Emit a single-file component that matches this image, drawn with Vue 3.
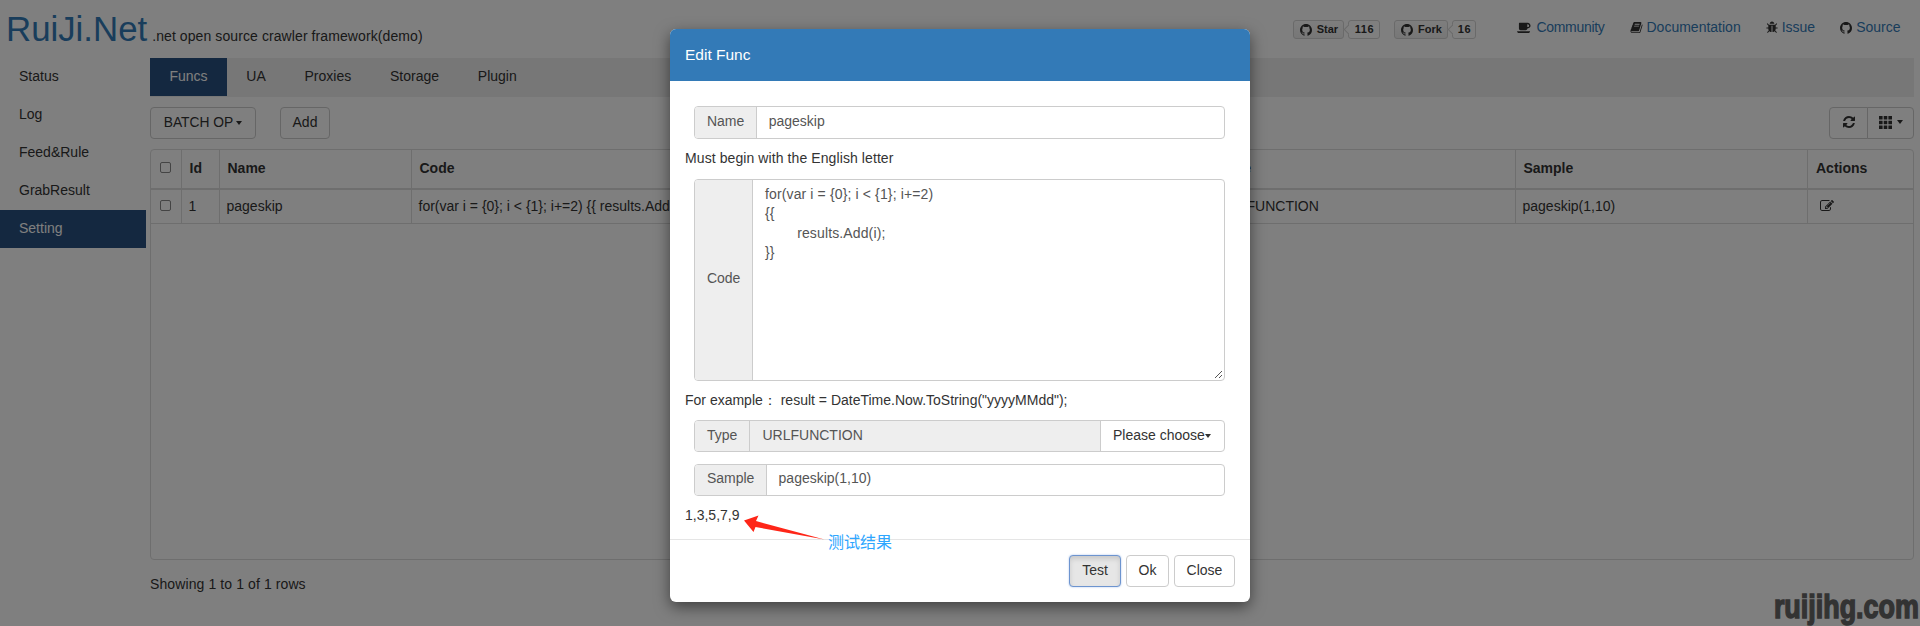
<script setup>
const githubPath = 'M8 0C3.58 0 0 3.58 0 8c0 3.54 2.29 6.53 5.47 7.59.4.07.55-.17.55-.38 0-.19-.01-.82-.01-1.49-2.01.37-2.53-.49-2.69-.94-.09-.23-.48-.94-.82-1.13-.28-.15-.68-.52-.01-.53.63-.01 1.08.58 1.23.82.72 1.21 1.87.87 2.33.66.07-.52.28-.87.51-1.07-1.78-.2-3.64-.89-3.64-3.95 0-.87.31-1.59.82-2.15-.08-.2-.36-1.02.08-2.12 0 0 .67-.21 2.2.82.64-.18 1.32-.27 2-.27.68 0 1.36.09 2 .27 1.53-1.04 2.2-.82 2.2-.82.44 1.1.16 1.92.08 2.12.51.56.82 1.27.82 2.15 0 3.07-1.87 3.75-3.65 3.95.29.25.54.73.54 1.48 0 1.07-.01 1.93-.01 2.2 0 .21.15.46.55.38A8.013 8.013 0 0016 8c0-4.42-3.58-8-8-8z'

const badges = [
  { label: 'Star', count: '116', cls: 'star' },
  { label: 'Fork', count: '16', cls: 'fork' }
]

const links = [
  { label: 'Community', box: '0 0 2048 1792', w: 15, h: 13, path: 'M1664 640q0-80-56-136t-136-56h-64v384h64q80 0 136-56t56-136zm-1664 768h1792q0 106-75 181t-181 75h-1280q-106 0-181-75t-75-181zm1856-768q0 159-112.5 271.5t-271.5 112.5h-64v32q0 92-66 158t-158 66h-704q-92 0-158-66t-66-158v-736q0-26 19-45t45-19h1152q159 0 271.5 112.5t112.5 271.5z' },
  { label: 'Documentation', box: '0 0 1792 1792', w: 13, h: 13, path: 'M1703 478q40 57 18 129l-275 906q-19 64-76.5 107.5t-122.5 43.5h-923q-77 0-148.5-53.5t-99.5-131.5q-24-67-2-127 0-4 3-27t4-37q1-8-3-21.5t-3-19.5q2-11 8-21t16.5-23.5 16.5-23.5q23-38 45-91.5t30-91.5q3-10 .5-30t-.5-28q3-11 17-28t17-23q21-36 42-92t25-90q1-9-2.5-32t.5-28q4-13 22-30.5t22-22.5q19-26 42.5-84.5t27.5-96.5q1-8-3-25.5t-2-26.5q2-8 9-18t18-23 17-21q8-12 16.5-30.5t15-35 16-36 19.5-32 26.5-23.5 36-11.5 47.5 5.5l-1 3q38-9 51-9h761q74 0 114 56t18 130l-274 906q-36 119-71.5 153.5t-128.5 34.5h-869q-27 0-38 15-11 16-1 43 24 70 144 70h923q29 0 56-15.5t35-41.5l300-987q7-22 5-57 38 15 59 43zm-1064 2q-4 13 2 22.5t20 9.5h608q13 0 25.5-9.5t16.5-22.5l21-64q4-13-2-22.5t-20-9.5h-608q-13 0-25.5 9.5t-16.5 22.5zm-83 256q-4 13 2 22.5t20 9.5h608q13 0 25.5-9.5t16.5-22.5l21-64q4-13-2-22.5t-20-9.5h-608q-13 0-25.5 9.5t-16.5 22.5z' },
  { label: 'Issue', box: '0 0 1664 1792', w: 12, h: 13, path: 'M1632 960q0 26-19 45t-45 19h-224q0 171-67 290l208 209q19 19 19 45t-19 45q-18 19-45 19t-45-19l-198-197q-5 5-15 13t-42 28.5-65 36.5-82 29-97 13v-896h-128v896q-51 0-101.5-13.5t-87-33-66-39-43.5-32.5l-15-14-183 207q-20 21-48 21-24 0-43-16-19-18-20.5-44.5t15.5-46.5l202-227q-58-114-58-274h-224q-26 0-45-19t-19-45 19-45 45-19h224v-294l-173-173q-19-19-19-45t19-45 45-19 45 19l173 173h844l173-173q19-19 45-19t45 19 19 45-19 45l-173 173v294h224q26 0 45 19t19 45zm-480-576h-640q0-133 93.5-226.5t226.5-93.5 226.5 93.5 93.5 226.5z' },
  { label: 'Source', box: '0 0 16 16', w: 12, h: 12, path: githubPath }
]

const sideItems = ['Status', 'Log', 'Feed&Rule', 'GrabResult', 'Setting']
const tabs = ['Funcs', 'UA', 'Proxies', 'Storage', 'Plugin']
const headers = ['Id', 'Name', 'Code', 'Type', 'Sample', 'Actions']
const row = ['1', 'pageskip', 'for(var i = {0}; i < {1}; i+=2) {{ results.Add(i); }}', 'URLFUNCTION', 'pageskip(1,10)']
const codeText = 'for(var i = {0}; i < {1}; i+=2)\n{{\n\tresults.Add(i);\n}}'
</script>

<template>
  <div class="page">
    <header class="topbar">
      <span class="brand">RuiJi.Net</span>
      <span class="tagline">.net open source crawler framework(demo)</span>
      <div class="top-right">
        <div class="badges">
          <div v-for="b in badges" :key="b.label" class="badge" :class="b.cls">
            <span class="badge-btn">
              <svg class="badge-ico" viewBox="0 0 16 16"><path :d="githubPath" /></svg>{{ b.label }}
            </span>
            <span class="badge-count">{{ b.count }}</span>
          </div>
        </div>
        <nav class="links">
          <a v-for="l in links" :key="l.label" class="link">
            <svg class="link-ico" :viewBox="l.box" :width="l.w" :height="l.h"><path :d="l.path" /></svg>
            <span class="link-text">{{ l.label }}</span>
          </a>
        </nav>
      </div>
    </header>

    <div class="layout">
      <aside class="sidebar">
        <div v-for="s in sideItems" :key="s" class="side-item" :class="{ active: s === 'Setting' }">{{ s }}</div>
      </aside>

      <main class="main">
        <div class="tabs">
          <div v-for="t in tabs" :key="t" class="tab" :class="{ active: t === 'Funcs' }">{{ t }}</div>
        </div>

        <div class="toolbar">
          <button class="btn batch">BATCH OP<i class="caret"></i></button>
          <button class="btn add">Add</button>
          <div class="tool-group">
            <button class="btn tool refresh" aria-label="Refresh">
              <svg viewBox="0 0 1792 1792" width="14" height="14"><path d="M1639 1056q0 5-1 7-64 268-268 434.5t-478 166.5q-146 0-282.5-55t-243.5-157l-129 129q-19 19-45 19t-45-19-19-45v-448q0-26 19-45t45-19h448q26 0 45 19t19 45-19 45l-137 137q71 66 161 102t187 36q134 0 250-65t186-179q11-17 53-117 8-23 30-23h192q13 0 22.5 9.5t9.5 22.5zm25-800v448q0 26-19 45t-45 19h-448q-26 0-45-19t-19-45 19-45l138-138q-148-137-349-137-134 0-250 65t-186 179q-11 17-53 117-8 23-30 23h-199q-13 0-22.5-9.5t-9.5-22.5v-7q65-268 270-434.5t480-166.5q146 0 284 55.5t245 156.5l130-129q19-19 45-19t45 19 19 45z" /></svg>
            </button>
            <button class="btn tool columns" aria-label="Columns">
              <svg viewBox="0 0 13 13" width="13" height="13"><path d="M0 0h3.6v3.6H0zM4.7 0h3.6v3.6H4.7zM9.4 0H13v3.6H9.4zM0 4.7h3.6v3.6H0zM4.7 4.7h3.6v3.6H4.7zM9.4 4.7H13v3.6H9.4zM0 9.4h3.6V13H0zM4.7 9.4h3.6V13H4.7zM9.4 9.4H13V13H9.4z" /></svg><i class="caret"></i>
            </button>
          </div>
        </div>

        <div class="table-wrap">
          <table class="grid">
            <colgroup>
              <col class="c-check" /><col class="c-id" /><col class="c-name" /><col class="c-code" /><col class="c-type" /><col class="c-sample" /><col class="c-actions" />
            </colgroup>
            <thead>
              <tr>
                <th class="check-cell"><input type="checkbox" class="check" /></th>
                <th v-for="h in headers" :key="h">{{ h }}</th>
              </tr>
            </thead>
            <tbody>
              <tr>
                <td class="check-cell"><input type="checkbox" class="check" /></td>
                <td v-for="(c, i) in row" :key="i">{{ c }}</td>
                <td class="action-cell">
                  <svg viewBox="0 0 1792 1792" width="14" height="14"><path d="M888 1184l116-116-152-152-116 116v56h96v96h56zm440-720q-16-16-33 1l-350 350q-17 17-1 33t33-1l350-350q17-17 1-33zm80 594v190q0 119-84.5 203.5t-203.5 84.5h-832q-119 0-203.5-84.5t-84.5-203.5v-832q0-119 84.5-203.5t203.5-84.5h832q63 0 117 25 15 7 18 23 3 17-9 29l-49 49q-14 14-32 8-23-6-45-6h-832q-66 0-113 47t-47 113v832q0 66 47 113t113 47h832q66 0 113-47t47-113v-126q0-13 9-22l64-64q15-15 35-7t20 29zm-96-738l288 288-672 672h-288v-288zm444 132l-92 92-288-288 92-92q28-28 68-28t68 28l152 152q28 28 28 68t-28 68z" /></svg>
                </td>
              </tr>
            </tbody>
          </table>
        </div>

        <div class="pager">Showing 1 to 1 of 1 rows</div>
      </main>
    </div>

    <div class="backdrop">
      <section class="modal">
        <div class="modal-head">Edit Func</div>
        <div class="modal-body">
          <div class="group name-group">
            <span class="addon">Name</span>
            <div class="field">pageskip</div>
          </div>
          <p class="note help">Must begin with the English letter</p>
          <div class="group code-group">
            <span class="addon">Code</span>
            <div class="field code-field">
              <div class="code-text">{{ codeText }}</div>
              <svg class="grip" viewBox="0 0 10 10" width="10" height="10"><path d="M9 2 2 9M9 6 6 9" /></svg>
            </div>
          </div>
          <p class="note example">For example：&nbsp;result = DateTime.Now.ToString("yyyyMMdd");</p>
          <div class="group type-group">
            <span class="addon">Type</span>
            <div class="field readonly">URLFUNCTION</div>
            <div class="choose">Please choose<i class="caret"></i></div>
          </div>
          <div class="group sample-group">
            <span class="addon">Sample</span>
            <div class="field">pageskip(1,10)</div>
          </div>
          <p class="note result">1,3,5,7,9</p>
        </div>
        <div class="modal-foot">
          <button class="btn test">Test</button>
          <button class="btn">Ok</button>
          <button class="btn">Close</button>
        </div>

        <svg class="arrow" viewBox="0 0 82 26" width="82" height="26">
          <path d="M0 5.5 14.5 .5 12 6 80.5 24.6 11.5 12 9.5 17z" />
        </svg>
        <span class="arrow-label">测试结果</span>
      </section>
    </div>

    <div class="watermark">ruijihg.com</div>
  </div>
</template>

<style>
html, body { margin: 0; padding: 0; background: #fff; }
</style>

<style scoped>
.page {
  position: relative;
  width: 100%;
  height: 626px;
  overflow: hidden;
  background: #fff;
  color: #333;
  font-family: "Liberation Sans", Arial, sans-serif;
  font-size: 14px;
  line-height: 1.42857;
}
button { font-family: inherit; }

.topbar {
  display: flex;
  align-items: baseline;
  height: 58px;
  box-sizing: border-box;
  padding-left: 6px;
  padding-top: 9px;
}
.brand { font-size: 34.8px; line-height: 40px; color: #337ab7; }
.tagline { margin-left: 5px; letter-spacing: .09px; }
.top-right {
  display: flex;
  align-items: flex-start;
  align-self: flex-start;
  margin-left: auto;
  padding-right: 19.5px;
  padding-top: 11px;
}
.badges { display: flex; gap: 14px; margin-right: 41px; }
.badge { display: flex; gap: 4px; font-size: 11px; font-weight: 700; line-height: 17px; }
.badge-btn {
  display: flex;
  align-items: center;
  justify-content: center;
  gap: 5px;
  height: 19px;
  box-sizing: border-box;
  border: 1px solid #d5d5d5;
  border-radius: 3px;
  background: linear-gradient(#fcfcfc, #eee);
}
.star .badge-btn { width: 51px; }
.fork .badge-btn { width: 54px; }
.badge-ico { width: 12px; height: 12px; fill: #333; }
.badge-count {
  position: relative;
  height: 19px;
  box-sizing: border-box;
  border: 1px solid #d5d5d5;
  border-radius: 3px;
  background: #fff;
  text-align: center;
  letter-spacing: .5px;
}
.star .badge-count { width: 32px; }
.fork .badge-count { width: 24px; }
.badge-count::before {
  content: "";
  position: absolute;
  left: -4px;
  top: 5px;
  width: 6px;
  height: 6px;
  background: #fff;
  border-left: 1px solid #d5d5d5;
  border-bottom: 1px solid #d5d5d5;
  transform: rotate(45deg);
}
.links { display: flex; gap: 25px; margin-top: -2px; }
.link { display: flex; align-items: center; gap: 4px; color: #337ab7; }
.link-ico { fill: #333; }
.link:first-child .link-text { letter-spacing: -.3px; }

.layout { display: flex; }
.sidebar { width: 146px; flex: none; margin-right: 4px; }
.side-item { height: 38px; line-height: 37px; padding-left: 19px; }
.side-item.active { background: #285080; color: #fff; }

.main { flex: 1; min-width: 0; padding-right: 6px; }
.tabs { display: flex; height: 39px; background: #eee; }
.tab { height: 38px; line-height: 37px; padding: 0 19.4px; }
.tab.active { background: #285080; color: #fff; }

.toolbar { display: flex; align-items: flex-start; margin-top: 10px; height: 32px; }
.btn {
  height: 32px;
  box-sizing: border-box;
  padding: 0 0 2px;
  background: #fff;
  border: 1px solid #ccc;
  border-radius: 4px;
  color: #333;
  font-size: 14px;
}
.batch { width: 106px; font-size: 13.8px; }
.add { width: 50px; margin-left: 24px; }
.tool-group { display: flex; margin-left: auto; }
.tool { display: flex; align-items: center; justify-content: center; }
.tool svg { fill: #333; }
.refresh { width: 39px; border-radius: 4px 0 0 4px; }
.columns { width: 47px; margin-left: -1px; border-radius: 0 4px 4px 0; }
.caret {
  display: inline-block;
  width: 0;
  height: 0;
  margin-left: 3px;
  vertical-align: middle;
  border-top: 4px solid #333;
  border-left: 3.5px solid transparent;
  border-right: 3.5px solid transparent;
}
.columns .caret { margin-left: 5px; }

.table-wrap {
  margin-top: 10px;
  height: 411px;
  box-sizing: border-box;
  border: 1px solid #ddd;
  border-radius: 4px;
  overflow: hidden;
}
.grid { width: 1762px; table-layout: fixed; border-collapse: separate; border-spacing: 0; }
.c-check { width: 29.5px; }
.c-id { width: 38px; }
.c-name { width: 192px; }
.c-code { width: 800px; }
.c-type { width: 304px; }
.c-sample { width: 292.5px; }
.c-actions { width: 106px; }
.grid th, .grid td {
  box-sizing: border-box;
  padding: 0 7px;
  text-align: left;
  white-space: nowrap;
  overflow: hidden;
  border-left: 1px solid #ddd;
}
.grid th:first-child, .grid td:first-child { border-left: 0; }
.grid th { height: 40px; padding-left: 8px; border-bottom: 2px solid #ddd; font-weight: 700; }
.grid td { height: 34px; border-bottom: 1px solid #ddd; }
.grid .check-cell { padding: 0; text-align: center; }
.check {
  appearance: none;
  display: block;
  width: 11px;
  height: 11px;
  margin: 0 0 3px 9px;
  border: 1px solid #888;
  border-radius: 2px;
  background: #fff;
}
td .check { margin-bottom: 2px; }
.action-cell svg { display: block; margin: 0 0 1px 5px; fill: #333; }
.pager { margin-top: 14px; line-height: 20px; letter-spacing: .1px; }

.backdrop {
  position: absolute;
  inset: 0;
  display: flex;
  justify-content: center;
  align-items: flex-start;
  padding-top: 29px;
  background: rgba(0, 0, 0, .5);
}
.modal {
  position: relative;
  width: 580px;
  border-radius: 6px;
  background: #fff;
  box-shadow: 0 5px 15px rgba(0, 0, 0, .5);
}
.modal-head {
  height: 52px;
  box-sizing: border-box;
  padding-left: 15px;
  line-height: 51px;
  background: #337ab7;
  color: #fff;
  font-size: 15.5px;
  border-radius: 6px 6px 0 0;
}
.modal-body { padding: 25px 15px 14px; color: #333; }
.group {
  display: flex;
  box-sizing: border-box;
  margin: 0 10px 0 9.4px;
  border: 1px solid #ccc;
  border-radius: 4px;
  overflow: hidden;
  color: #555;
}
.name-group { height: 33px; }
.code-group { height: 202px; margin-top: 11px; }
.type-group { height: 32px; margin-top: 10px; }
.sample-group { height: 32px; margin-top: 12px; }
.addon {
  display: flex;
  align-items: center;
  box-sizing: border-box;
  padding: 0 0 2px 11.5px;
  background: #eee;
  border-right: 1px solid #ccc;
  flex: none;
}
.name-group .addon { width: 61.3px; }
.code-group .addon { width: 57.6px; }
.type-group .addon { width: 55.1px; }
.sample-group .addon { width: 71.2px; }
.field { flex: 1; display: flex; align-items: center; padding: 0 12px 2px; min-width: 0; }
.code-field { position: relative; align-items: flex-start; padding-top: 5px; }
.code-text { white-space: pre; tab-size: 8; line-height: 19.4px; letter-spacing: .13px; }
.grip {
  position: absolute;
  right: 1px;
  bottom: 1px;
  fill: none;
  stroke: #555;
  stroke-width: 1;
}
.readonly { background: #eee; }
.choose {
  display: flex;
  align-items: center;
  flex: none;
  width: 124px;
  box-sizing: border-box;
  padding: 0 0 2px 12px;
  border-left: 1px solid #ccc;
  color: #333;
}
.choose .caret { margin-left: 0; }
.type-group .addon, .type-group .field, .type-group .choose { padding-bottom: 0; }
.note { margin: 0; line-height: 20px; height: 20px; }
.help { margin-top: 9px; letter-spacing: .09px; }
.example { margin-top: 9px; }
.result { margin-top: 9px; }

.modal-foot {
  display: flex;
  justify-content: flex-end;
  gap: 5px;
  padding: 15px;
  border-top: 1px solid #e5e5e5;
}
.modal-foot .btn:nth-child(1) { width: 52px; }
.modal-foot .btn:nth-child(2) { width: 43px; }
.modal-foot .btn:nth-child(3) { width: 61px; }
.modal-foot .test {
  background: #e6e6e6;
  border: 1px solid #6d94cf;
  box-shadow: inset 0 3px 5px rgba(0, 0, 0, .125), 0 0 2px rgba(102, 150, 220, .6);
}

.arrow { position: absolute; left: 74px; top: 486px; fill: #fe2618; }
.arrow-label {
  position: absolute;
  left: 158px;
  top: 504px;
  color: #2ea6ff;
  font-family: "Liberation Sans", "Noto Sans CJK SC", sans-serif;
  font-size: 16px;
  line-height: 20px;
  white-space: nowrap;
}

.watermark {
  position: absolute;
  right: 1px;
  bottom: 1px;
  color: #333;
  font-size: 33px;
  font-weight: 700;
  line-height: 36px;
  -webkit-text-stroke: 1.5px #333;
  transform: scaleX(.815);
  transform-origin: right bottom;
  white-space: nowrap;
}
</style>
